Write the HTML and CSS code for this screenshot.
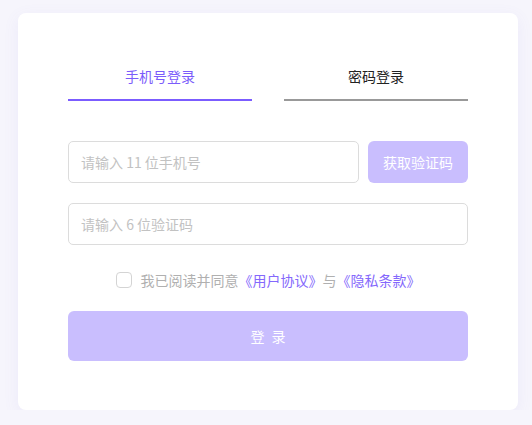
FILE: index.html
```html
<!DOCTYPE html>
<html lang="zh-CN">
<head>
<meta charset="utf-8">
<title>登录</title>
<link rel="stylesheet" href="styles.css">
</head>
<body>
<div class="card">
  <div class="tabs">
    <div class="tab active">手机号登录</div>
    <div class="tab">密码登录</div>
  </div>
  <div class="row phone-row">
    <input class="field" type="text" placeholder="请输入 11 位手机号">
    <button class="code-btn" type="button">获取验证码</button>
  </div>
  <div class="row">
    <input class="field" type="text" placeholder="请输入 6 位验证码">
  </div>
  <label class="agree">
    <span class="check"></span>
    <span class="agree-text">我已阅读并同意<a class="link">《用户协议》</a>与<a class="link">《隐私条款》</a></span>
  </label>
  <button class="login-btn" type="button">登 录</button>
</div>
</body>
</html>
```

FILE: styles.css
```css
* { box-sizing: border-box; }
html, body { margin: 0; padding: 0; }
body {
  background: #f6f5fc;
  font-family: "Noto Sans CJK SC", "Noto Sans", sans-serif;
  padding: 13px 14px 0 18px;
}
.card {
  width: 500px;
  height: 397px;
  background: #fff;
  border-radius: 8px;
  box-shadow: 0 4px 16px rgba(120, 100, 220, 0.08);
  padding: 53px 50px 49px;
  display: flex;
  flex-direction: column;
}
.tabs {
  display: flex;
  gap: 32px;
}
.tab {
  flex: 1;
  text-align: center;
  font-size: 14px;
  line-height: 20px;
  color: #222;
  padding-bottom: 13px;
  border-bottom: 2px solid #999;
}
.tab.active {
  color: #7b5cfb;
  border-bottom-color: #7b5cff;
}
.row {
  display: flex;
  gap: 9px;
  margin-top: 20px;
}
.phone-row { margin-top: 40px; }
.field {
  flex: 1;
  min-width: 0;
  height: 42px;
  border: 1px solid #dcdcdc;
  border-radius: 5px;
  padding: 0 12px;
  font-family: inherit;
  font-size: 14px;
  color: #333;
  outline: none;
  background: #fff;
}
.field::placeholder { color: #c2c2c2; }
.code-btn {
  width: 100px;
  height: 42px;
  border: none;
  border-radius: 6px;
  background: #c9befe;
  color: #fff;
  font-family: inherit;
  font-size: 14px;
  padding: 0;
}
.agree {
  display: flex;
  align-items: center;
  justify-content: center;
  gap: 9px;
  margin-top: 25px;
  height: 20px;
  font-size: 14px;
  line-height: 20px;
  color: #b0b0b0;
}
.check {
  width: 16px;
  height: 16px;
  border: 1px solid #d4d4d4;
  border-radius: 4px;
  background: #fff;
  flex: none;
}
.link { color: #8468fc; }
.login-btn {
  margin-top: 21px;
  height: 50px;
  border: none;
  border-radius: 6px;
  background: #c9befe;
  color: #fff;
  font-family: inherit;
  font-size: 14px;
  letter-spacing: 2px;
  padding: 0 0 0 2px;
}
```
